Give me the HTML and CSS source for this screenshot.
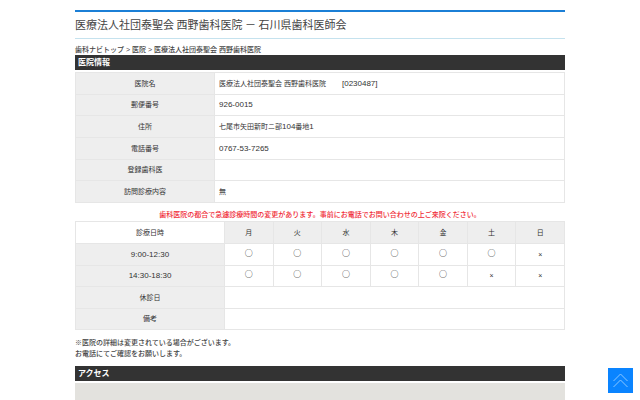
FILE: index.html
```html
<!DOCTYPE html>
<html lang="ja">
<head>
<meta charset="utf-8">
<meta name="viewport" content="width=device-width, initial-scale=1">
<title>医療法人社団泰聖会 西野歯科医院 － 石川県歯科医師会</title>
<link rel="stylesheet" href="styles.css">
</head>
<body>
<main class="page">
  <h1 class="title">医療法人社団泰聖会 西野歯科医院 － 石川県歯科医師会</h1>
  <nav class="crumbs"><a href="#">歯科ナビトップ</a> &gt; <a href="#">医院</a> &gt; 医療法人社団泰聖会 西野歯科医院</nav>
  <h2 class="bar">医院情報</h2>
  <table class="grid info">
    <tbody>
      <tr><th scope="row">医院名</th><td>医療法人社団泰聖会 西野歯科医院<span class="num code">[0230487]</span></td></tr>
      <tr><th scope="row">郵便番号</th><td class="num">926-0015</td></tr>
      <tr><th scope="row">住所</th><td>七尾市矢田新町ニ部<span class="num">104</span>番地<span class="num">1</span></td></tr>
      <tr><th scope="row">電話番号</th><td class="num">0767-53-7265</td></tr>
      <tr><th scope="row">登録歯科医</th><td></td></tr>
      <tr><th scope="row">訪問診療内容</th><td>無</td></tr>
    </tbody>
  </table>
  <p class="warning">歯科医院の都合で急遽診療時間の変更があります。事前にお電話でお問い合わせの上ご来院ください。</p>
  <table class="grid hours">
    <thead>
      <tr><td>診療日時</td><th scope="col">月</th><th scope="col">火</th><th scope="col">水</th><th scope="col">木</th><th scope="col">金</th><th scope="col">土</th><th scope="col">日</th></tr>
    </thead>
    <tbody>
      <tr><th scope="row" class="num">9:00-12:30</th><td class="open">○</td><td class="open">○</td><td class="open">○</td><td class="open">○</td><td class="open">○</td><td class="open">○</td><td>×</td></tr>
      <tr><th scope="row" class="num">14:30-18:30</th><td class="open">○</td><td class="open">○</td><td class="open">○</td><td class="open">○</td><td class="open">○</td><td>×</td><td>×</td></tr>
      <tr><th scope="row">休診日</th><td colspan="7"></td></tr>
      <tr><th scope="row">備考</th><td colspan="7"></td></tr>
    </tbody>
  </table>
  <p class="notes">※医院の詳細は変更されている場合がございます。<br>お電話にてご確認をお願いします。</p>
  <h2 class="bar">アクセス</h2>
  <div class="map"></div>
</main>
<a class="to-top" href="#" aria-label="ページの先頭へ">
  <svg viewBox="0 0 25 25" fill="none" stroke="#8cc8ff" stroke-width="1"><path d="M5.500 13 12.500 6 19.500 13M5.500 19 12.500 12 19.500 19"/></svg>
</a>
</body>
</html>
```
FILE: styles.css
```css
* {
  box-sizing: border-box;
}

body {
  margin: 0;
  background: #fff;
  color: #444;
  font: 500 7px/11px "Liberation Sans", "Noto Sans CJK JP", sans-serif;
}

a {
  color: inherit;
  text-decoration: none;
}

.page {
  display: flex;
  flex-direction: column;
  width: 77%;
  max-width: 490px;
  min-height: 100vh;
  margin: 0 auto;
  padding-top: 10px;
}

.title {
  margin: 0 0 5px;
  padding: 5px 0 6px;
  border-top: 2px solid #1b7fd6;
  border-bottom: 1px solid #c5e2ee;
  font-family: "Noto Sans CJK JP", sans-serif;
  font-size: 11px;
  font-weight: 400;
  line-height: 15px;
}

.crumbs {
  line-height: 11px;
}

.bar {
  margin: 0 0 2px;
  padding: 0 3px;
  background: #333;
  color: #fff;
  font-size: 8px;
  font-weight: 700;
  line-height: 15px;
}

.grid {
  width: 100%;
  border-collapse: collapse;
  table-layout: fixed;
  color: #333;
}

.grid th,
.grid td {
  padding: 0 4px;
  border: 1px solid #e6e6e6;
  font-weight: 400;
}

.grid th {
  background: #eee;
}

.info {
  height: 131px;
}

.info th {
  width: 139px;
}

.num {
  font-size: 8px;
}

.code {
  margin-left: 16px;
}

.warning {
  margin: 6px 0 1px;
  color: #f02a35;
  text-align: center;
}

.hours {
  height: 109px;
  text-align: center;
}

.hours thead tr {
  height: 22px;
}

.hours tr > :first-child {
  width: 149px;
}

.hours .open {
  padding-bottom: 3px;
  font-family: "Noto Sans CJK JP", sans-serif;
  font-size: 8px;
  font-weight: 500;
  line-height: 8px;
}

.notes {
  margin: 7px 0;
}

.map {
  flex: 1;
  background: #e3e2de;
}

.to-top {
  position: fixed;
  right: 7px;
  bottom: 7px;
  width: 25px;
  height: 25px;
  background: #0a84ff;
}

.to-top svg {
  display: block;
}
```
